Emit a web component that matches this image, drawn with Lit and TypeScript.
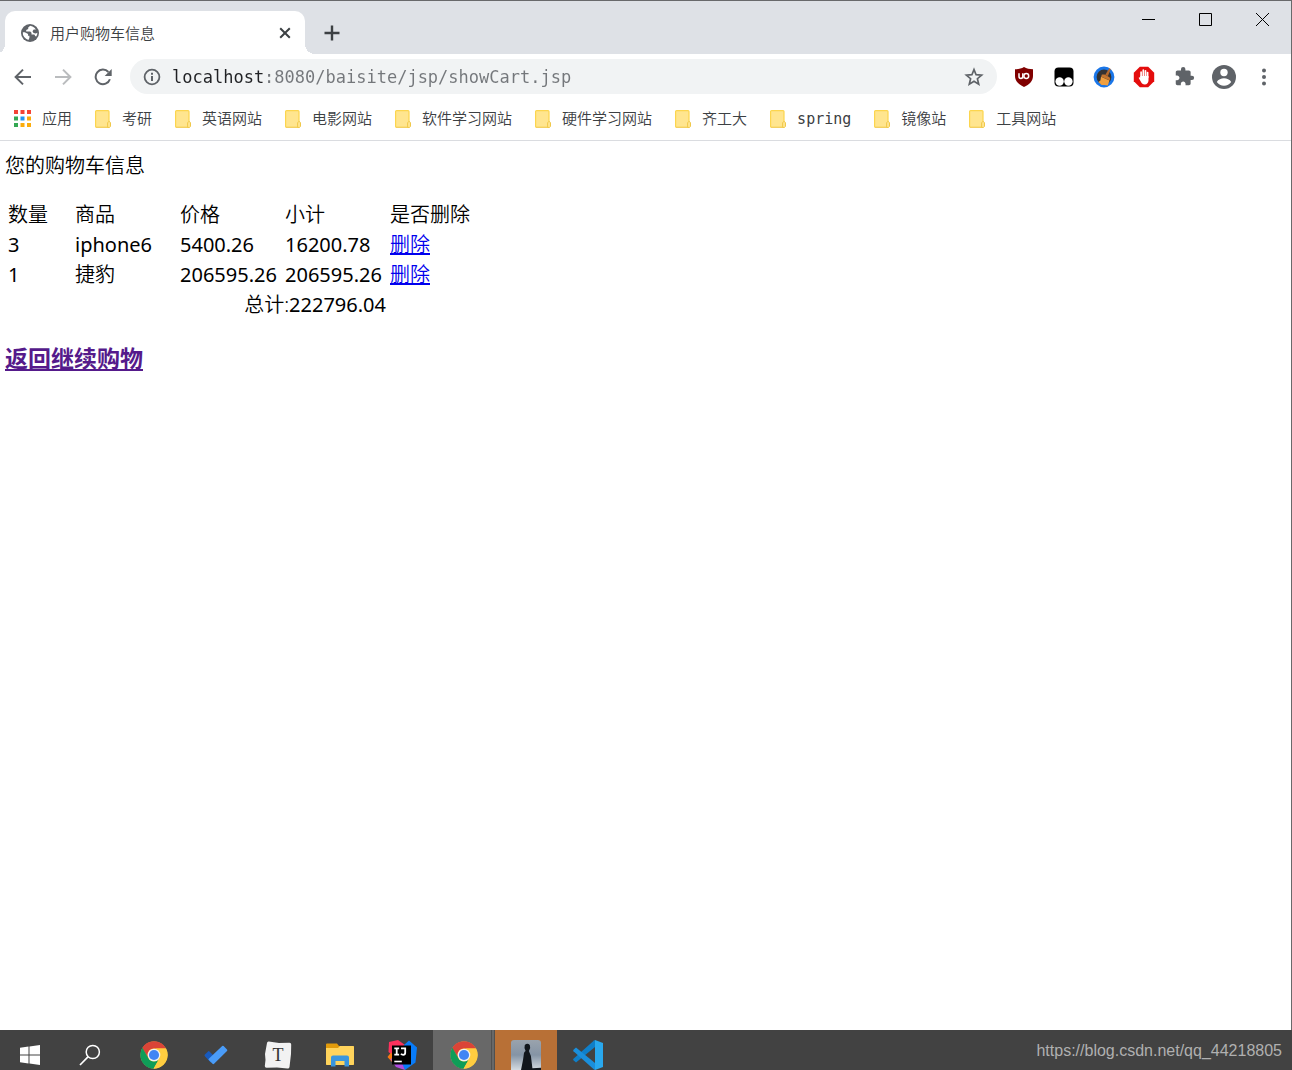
import { LitElement, html, css, svg } from "lit";
import { customElement } from "lit/decorators.js";

interface CartItem {
  count: number;
  name: string;
  lang: string;
  price: string;
  subtotal: string;
}

const items: CartItem[] = [
  { count: 3, name: "iphone6", lang: "en", price: "5400.26", subtotal: "16200.78" },
  { count: 1, name: "捷豹", lang: "zh", price: "206595.26", subtotal: "206595.26" },
];

const bookmarks = [
  "考研", "英语网站", "电影网站", "软件学习网站", "硬件学习网站",
  "齐工大", "spring", "镜像站", "工具网站",
];

const appColors = [
  "#f44336", "#f44336", "#f44336",
  "#34a853", "#2196f3", "#fbac0c",
  "#34a853", "#fbac0c", "#fbac0c",
];

const globe = html`<svg width="20" height="20" viewBox="0 0 20 20" aria-hidden="true">
  <circle cx="10" cy="10" r="9" fill="#5f6368" />
  <path d="M10.2 2.8 8.2 4.6v1.5l-2 .9v1.6h4l1.3 1.2v1.7h2.2c.9 0 1.3.6 1.3 1.4l1.2.7c.8-1.1 1.2-2.4 1.2-3.8l-1.6.6-2.3-.4-1-1.8 1.2-1.7h2.2a7.2 7.2 0 0 0-3.4-2.9z" fill="#fff" />
  <path d="M2.8 9.2h1.9l3 1.6c.6.5.5 1.4.1 1.9h1.6v2.2l-1 2A7.2 7.2 0 0 1 2.8 9.2z" fill="#fff" />
</svg>`;

const closeIcon = html`<svg width="12" height="12" viewBox="0 0 12 12" aria-hidden="true">
  <path d="M1.2 1.2l9.6 9.6M10.8 1.2L1.2 10.8" stroke="#3c4043" stroke-width="2" fill="none" />
</svg>`;

const plusIcon = html`<svg width="16" height="16" viewBox="0 0 16 16" aria-hidden="true">
  <path d="M8 .5v15M.5 8h15" stroke="#3c4043" stroke-width="2.4" fill="none" />
</svg>`;

const arrow = (color: string, flip: boolean) => html`<svg width="18" height="18" viewBox="0 0 18 18" aria-hidden="true">
  <path d=${flip ? "M1 9h15M9 1.6 16.4 9 9 16.4" : "M17 9H2M9 1.6 1.6 9 9 16.4"} stroke=${color} stroke-width="2" fill="none" />
</svg>`;

const reloadIcon = html`<svg width="18" height="18" viewBox="0 0 18 18" aria-hidden="true">
  <path d="M15.9 11.2A7.3 7.3 0 1 1 14.4 4" stroke="#5f6368" stroke-width="2" fill="none" />
  <path d="M17.7.9v7h-7z" fill="#5f6368" />
</svg>`;

const infoIcon = html`<svg width="18" height="18" viewBox="0 0 18 18" aria-hidden="true">
  <circle cx="9" cy="9" r="7.4" stroke="#5f6368" stroke-width="1.8" fill="none" />
  <path d="M9 8v5M9 4.8v2" stroke="#5f6368" stroke-width="2" />
</svg>`;

const starIcon = html`<svg width="20" height="20" viewBox="0 0 20 20" aria-hidden="true">
  <path d="M10 2.6l2.1 5.1 5.5.4-4.2 3.6 1.3 5.4-4.7-2.9-4.7 2.9 1.3-5.4L2.4 8.100l5.500-.4z" stroke="#5f6368" stroke-width="1.700" fill="none" />
</svg>`;

const ublock = html`<svg width="20" height="22" viewBox="0 0 20 22" aria-hidden="true">
  <path d="M10 1c2.500 1.600 5.500 2.200 9 2.200V10c0 5-3.500 8.500-9 11-5.500-2.500-9-6-9-11V3.200C4.500 3.200 7.500 2.600 10 1z" fill="#800000" />
  <path d="M5 7.300v3.200a1.900 1.900 0 0 0 3.800 0V7.300v5.200" stroke="#fff" stroke-width="1.500" fill="none" />
  <circle cx="12.300" cy="10" r="2.400" stroke="#fff" stroke-width="1.500" fill="none" />
</svg>`;

const tampermonkey = html`<svg width="20" height="20" viewBox="0 0 20 20" aria-hidden="true">
  <rect x=".5" y=".5" width="19" height="19" rx="4" fill="#000" />
  <circle cx="5.600" cy="14.500" r="4.200" fill="#fff" />
  <circle cx="14.400" cy="14.500" r="4.200" fill="#fff" />
</svg>`;

const broom = html`<svg width="22" height="22" viewBox="0 0 22 22" aria-hidden="true">
  <circle cx="11" cy="11" r="8.900" fill="#333" stroke="#1a76e8" stroke-width="3" />
  <path d="M16.200 2.200l1.600.9-2.900 6.900-2.700-1.100z" fill="#b5692c" />
  <path d="M8.800 8.600l2.700 0 5 2.700.8 1.800-.8 1.200-8.300-3.500z" fill="#c4762e" />
  <path d="M8 10.800l8.500 3.600-1.700 5.200-3.600-.6-2.600-.1-3.200-2.900 2-1.600z" fill="#f0a040" />
</svg>`;

const adblock = html`<svg width="22" height="22" viewBox="0 0 22 22" aria-hidden="true">
  <path d="M6.800.800h8.400l6 6v8.400l-6 6H6.800l-6-6V6.800z" fill="#e40d0d" />
  <path d="M8.100 11.500V6.200M10.300 10.500V4.200M12.500 10.500V4.800M14.600 11.500V6.600" stroke="#fff" stroke-width="1.700" stroke-linecap="round" />
  <path d="M7.300 10h8.200v4.600c0 2.400-1.500 3.900-3.700 3.900-2 0-3-.8-3.900-2.700l-2.200-3.800c0-1 .9-1.200 1.600-.2z" fill="#fff" />
</svg>`;

const puzzle = html`<svg width="21" height="21" viewBox="0 0 24 24" aria-hidden="true">
  <path d="M20.500 11H19V7c0-1.100-.9-2-2-2h-4V3.500a2.500 2.500 0 0 0-5 0V5H4c-1.100 0-1.990.9-1.990 2v3.800H3.500c1.490 0 2.700 1.210 2.700 2.700s-1.210 2.700-2.700 2.700H2V20c0 1.100.9 2 2 2h3.800v-1.500c0-1.490 1.210-2.700 2.700-2.700s2.700 1.210 2.700 2.700V22H17c1.100 0 2-.9 2-2v-4h1.500a2.500 2.500 0 0 0 0-5z" fill="#5f6368" />
</svg>`;

const avatar = html`<svg width="24" height="24" viewBox="0 0 24 24" aria-hidden="true">
  <circle cx="12" cy="12" r="12" fill="#5f6368" />
  <circle cx="12" cy="7.500" r="3.700" fill="#fff" />
  <path d="M4.800 17c1.200-2.500 4.600-3.700 7.200-3.700s6 1.200 7.200 3.700a8.700 8.700 0 0 1-14.400 0z" fill="#fff" />
</svg>`;

const dots = html`<svg width="6" height="18" viewBox="0 0 6 18" aria-hidden="true">
  <circle cx="3" cy="2.500" r="2" fill="#5f6368" /><circle cx="3" cy="9" r="2" fill="#5f6368" /><circle cx="3" cy="15.500" r="2" fill="#5f6368" />
</svg>`;

const folderMark = html`<svg width="16" height="18" viewBox="0 0 16 18" aria-hidden="true">
  <rect x=".6" y=".6" width="13.400" height="16.800" rx="1" fill="#ffe58f" stroke="#fcd54e" stroke-width="1.200" />
  <path d="M1 17.400h11" stroke="#f3cf63" stroke-width="1.200" />
  <path d="M12.600 17.400v-4.600l1-1.200h1l.9 1.200v3.600l-1 1z" fill="#ffe58f" stroke="#f0c84a" />
</svg>`;

const appsIcon = html`<svg width="17" height="17" viewBox="0 0 17 17" aria-hidden="true">
  ${appColors.map((c, i) => svg`<rect x=${(i % 3) * 6.5} y=${Math.floor(i / 3) * 6.5} width="4" height="4" fill=${c} />`)}
</svg>`;

const windowsLogo = html`<svg width="20" height="20" viewBox="0 0 20 20" aria-hidden="true">
  <path d="M0 2.800l8.500-1.200v8H0zM9.500 1.400L20 0v9.600H9.500zM0 10.500h8.500v8L0 17.300zM9.500 10.500H20V20L9.500 18.600z" fill="#fff" />
</svg>`;

const searchIcon = html`<svg width="22" height="22" viewBox="0 0 22 22" aria-hidden="true">
  <circle cx="13.800" cy="8" r="6.600" stroke="#fff" stroke-width="1.500" fill="none" />
  <path d="M9.200 12.700L1 21" stroke="#fff" stroke-width="1.700" />
</svg>`;

const chromeLogo = html`<svg width="28" height="28" viewBox="0 0 48 48" aria-hidden="true">
  <circle cx="24" cy="24" r="23" fill="#ffcd40" />
  <path d="M24 13h20.800A23.500 23.500 0 0 0 3.650 12.250L14.470 29.500A11 11 0 0 1 24 13z" fill="#db4437" />
  <path d="M14.470 29.500L4.100 11.550A23.500 23.500 0 0 0 23.200 47.490L33.530 29.500A11 11 0 0 1 14.470 29.500z" fill="#0f9d58" />
  <path d="M33.530 29.500L23.200 47.490A23.500 23.500 0 0 0 44.800 13H24a11 11 0 0 1 9.530 16.500z" fill="#ffcd40" />
  <circle cx="24" cy="24" r="10.800" fill="#f1f1f1" />
  <circle cx="24" cy="24" r="8.700" fill="#4285f4" />
</svg>`;

const todoIcon = html`<svg width="24" height="20" viewBox="0 0 24 20" aria-hidden="true">
  <path d="M5.200 6.200l5.500 5.500-4 5.700L.9 11.300q-.8-.9 0-1.700L4.300 6.200q.5-.5.9 0z" fill="#185abd" />
  <path d="M18.200 1.100q.7-.7 1.400 0l3.400 3.400q.7.700 0 1.400L10.100 18.800q-.8.800-1.600 0l-3.700-3.700q-.7-.7 0-1.400z" fill="#4a9cf8" />
</svg>`;

const typoraIcon = html`<svg width="30" height="30" viewBox="0 0 30 30" aria-hidden="true">
  <path d="M4 3q.2-1.700 1.800-1.500L16 3l10.500-.2q1.800.2 1.700 1.800L28 14l-1.500 13q-.3 1.800-2 1.600L14 27.500l-10.500.3q-1.800-.1-1.700-1.700L2.500 20 2 14z" fill="#f2f2f2" />
  <text x="15" y="21" text-anchor="middle" font-family="Liberation Serif, serif" font-size="18" fill="#333">T</text>
</svg>`;

const explorerIcon = html`<svg width="28" height="24" viewBox="0 0 28 24" aria-hidden="true">
  <path d="M0 1.500Q0 .500 1 .500h10l2 2.500h14q1 0 1 1V21q0 1-1 1H1q-1 0-1-1z" fill="#e29b0b" />
  <path d="M0 5h12l2-2h13q1 0 1 1v17q0 1-1 1H1q-1 0-1-1z" fill="#ffd45c" />
  <path d="M5 23.500V14.500q0-2 2-2h14q2 0 2 2v9h-4.500V18h-9v5.500z" fill="#3a96dd" />
</svg>`;

const ideaIcon = html`<svg width="30" height="30" viewBox="0 0 30 30" aria-hidden="true">
  <path d="M2 2L11 0l7 5-3 18L1.500 12z" fill="#fe315d" />
  <path d="M.5 17L4 12.500 11 24l-6-2z" fill="#f97a12" />
  <path d="M17 5l5-4.500L30 7.500l-1.500 15L18 30l-8-14z" fill="#087cfa" />
  <path d="M3.500 19l5.500 8 9 3-6-14z" fill="#b04be0" />
  <rect x="5" y="5.500" width="19" height="19" fill="#000" />
  <path d="M7.300 8.300h4.800M9.700 8.300v6.400M7.300 14.700h4.800M14 8.300h4.200v4.500q0 2-2 2-1.400 0-2.200-1" stroke="#fff" stroke-width="1.800" fill="none" />
  <path d="M7.300 21.500h7.500" stroke="#fff" stroke-width="1.600" />
</svg>`;

const portraitIcon = html`<svg width="30" height="30" viewBox="0 0 30 30" aria-hidden="true">
  <defs>
    <linearGradient id="sky" x1="0" y1="0" x2="0" y2="1">
      <stop offset="0" stop-color="#9aa3ad" /><stop offset=".5" stop-color="#8594a5" /><stop offset="1" stop-color="#d4dbe1" />
    </linearGradient>
  </defs>
  <path d="M0 30V3q0-3 3-3h24q3 0 3 3v27z" fill="url(#sky)" />
  <path d="M13.800 5q2.600-2.600 5 0 1.200 3-.9 6l2 5 1.500 12.200 8.600-.4V30H10l2-10 1-7q.6-1.500 1.600-2-1.800-3-.8-6z" fill="#11161c" />
</svg>`;

const codeIcon = html`<svg width="30" height="30" viewBox="0 0 30 30" aria-hidden="true">
  <path d="M22 0l8 3v24l-8 3z" fill="#29a8ee" />
  <path d="M22 7L3 22.500l-2.500-2.200q-.6-.8 0-1.500L21 .500 22 0z" fill="#0f7fc9" />
  <path d="M22 23L3 7.500.500 9.700q-.6.800 0 1.500L21 29.500l1 .5z" fill="#1a8fdc" />
</svg>`;

@customElement("app-root")
export class AppRoot extends LitElement {
  static styles = css`
    :host {
      display: flex;
      flex-direction: column;
      min-height: 100vh;
      font-family: "Noto Sans", "Noto Sans CJK SC", sans-serif;
      color: #000;
      background: #fff;
    }
    * { box-sizing: border-box; }
    svg { display: block; flex: none; }
    button {
      display: flex;
      align-items: center;
      justify-content: center;
      padding: 0;
      border: 0;
      background: none;
      font: inherit;
      cursor: pointer;
    }
    .window {
      flex: 1;
      display: flex;
      flex-direction: column;
      border-top: 1px solid #68696b;
      border-right: 1px solid #68696b;
    }
    .strip {
      display: flex;
      align-items: flex-end;
      height: 53px;
      padding-left: 5px;
      background: #dee1e6;
    }
    .tab {
      position: relative;
      display: flex;
      align-items: center;
      width: 300px;
      height: 43px;
      padding: 0 14px 0 15px;
      gap: 10px;
      border-radius: 10px 10px 0 0;
      background: #fff;
    }
    .tab::before, .tab::after {
      content: "";
      position: absolute;
      bottom: 0;
      width: 10px;
      height: 10px;
    }
    .tab::before { left: -10px; background: radial-gradient(circle at 0 0, #dee1e6 10px, #fff 10px); }
    .tab::after { right: -10px; background: radial-gradient(circle at 100% 0, #dee1e6 10px, #fff 10px); }
    .title {
      flex: 1;
      font-size: 15px;
      font-family: "Noto Sans CJK SC", sans-serif;
      font-weight: 350;
      line-height: 20px;
      color: #3c4043;
      white-space: nowrap;
    }
    .new { width: 34px; height: 43px; margin-left: 10px; }
    .controls { display: flex; align-self: flex-start; margin-left: auto; }
    .control { width: 57px; height: 37px; }
    .toolbar {
      display: flex;
      align-items: center;
      height: 45px;
      padding: 0 7px 0 3px;
    }
    .tool { width: 40px; height: 36px; flex: none; }
    .omnibox {
      flex: 1;
      display: flex;
      align-items: center;
      height: 35px;
      margin: 0 7px;
      padding: 0 13px;
      gap: 11px;
      border-radius: 18px;
      background: #f1f3f4;
    }
    .info, .star { flex: none; }
    .address {
      flex: 1;
      min-width: 0;
      padding: 0;
      border: 0;
      outline: 0;
      font-family: "DejaVu Sans Mono", monospace;
      font-size: 17px;
      line-height: 24px;
      color: #5f6368;
      background: linear-gradient(90deg, #202124 9ch, #74777b 9ch);
      -webkit-background-clip: text;
      background-clip: text;
      -webkit-text-fill-color: transparent;
    }
    .bookmarks {
      display: flex;
      align-items: center;
      gap: 23px;
      height: 42px;
      padding: 0 14px 2px;
      border-bottom: 1px solid #dadce0;
      overflow: hidden;
    }
    .mark {
      display: flex;
      align-items: center;
      gap: 11px;
      font-family: "DejaVu Sans Mono", "Noto Sans CJK SC", monospace;
      font-size: 15px;
      font-weight: 350;
      line-height: 20px;
      color: #3c4043;
      text-decoration: none;
      white-space: nowrap;
    }
    .page { flex: 1; padding: 12px 5px; font-size: 20px; line-height: 26px; }
    .lead { margin: 0 0 20px; font-weight: 350; }
    .cart { border-spacing: 2px; table-layout: fixed; width: 480px; }
    .cart th, .cart td { padding: 1px; text-align: left; font-weight: 400; white-space: nowrap; }
    .cart th, .cart [lang="zh"] { font-weight: 350; }
    .cart .total { text-align: right; }
    .narrow { width: 65px; }
    .wide { width: 103px; }
    .remove { color: #0000ee; }
    .back { margin: 22px 0 0; font-size: 23px; line-height: 30px; font-weight: 700; }
    .back a { color: #551a8b; }
    .taskbar {
      display: flex;
      align-items: stretch;
      height: 40px;
      padding-right: 10px;
      background: #424242;
    }
    .task { width: 62px; height: 40px; padding-top: 10px; flex: none; }
    .system { width: 60px; }
    .search { margin-right: 3px; }
    .active { background: #686868; border-right: 4px double #505050; padding-left: 4px; }
    .alert { background: #b87036; }
    .watermark {
      margin-left: auto;
      padding-top: 11px;
      font-family: "Liberation Sans", sans-serif;
      font-size: 16px;
      line-height: 20px;
      color: #b0b0b0;
    }
  `;

  private cartTable() {
    return html`<table class="cart">
      <colgroup>
        <col class="narrow" /><col class="wide" /><col class="wide" /><col class="wide" /><col />
      </colgroup>
      <thead>
        <tr><th>数量</th><th>商品</th><th>价格</th><th>小计</th><th>是否删除</th></tr>
      </thead>
      <tbody>
        ${items.map((i) => html`<tr>
          <td>${i.count}</td><td lang=${i.lang}>${i.name}</td><td>${i.price}</td><td>${i.subtotal}</td>
          <td lang="zh"><a class="remove" href="#delete">删除</a></td>
        </tr>`)}
        <tr><td class="total" colspan="4"><span lang="zh">总计:</span>222796.04</td><td></td></tr>
      </tbody>
    </table>`;
  }

  render() {
    return html`
      <div class="window">
        <header>
          <div class="strip">
            <div class="tab">
              ${globe}<span class="title">用户购物车信息</span>
              <button aria-label="关闭标签页">${closeIcon}</button>
            </div>
            <button class="new" aria-label="新标签页">${plusIcon}</button>
            <div class="controls">
              <button class="control" aria-label="最小化"><svg width="13" height="13" viewBox="0 0 13 13"><path d="M0 6.500h13" stroke="#000" /></svg></button>
              <button class="control" aria-label="最大化"><svg width="13" height="13" viewBox="0 0 13 13"><path d="M.5.5h12v12H.5z" stroke="#000" fill="none" /></svg></button>
              <button class="control" aria-label="关闭"><svg width="13" height="13" viewBox="0 0 13 13"><path d="M0 0l13 13M13 0L0 13" stroke="#000" /></svg></button>
            </div>
          </div>
          <div class="toolbar">
            <button class="tool" aria-label="后退">${arrow("#5f6368", false)}</button>
            <button class="tool" aria-label="前进">${arrow("#babcbe", true)}</button>
            <button class="tool" aria-label="重新加载">${reloadIcon}</button>
            <div class="omnibox">
              <button class="info" aria-label="网站信息">${infoIcon}</button>
              <input class="address" type="text" aria-label="地址" spellcheck="false" .value=${"localhost:8080/baisite/jsp/showCart.jsp"} />
              <button class="star" aria-label="添加书签">${starIcon}</button>
            </div>
            <button class="tool" aria-label="uBlock">${ublock}</button>
            <button class="tool" aria-label="Tampermonkey">${tampermonkey}</button>
            <button class="tool" aria-label="清理">${broom}</button>
            <button class="tool" aria-label="AdBlock">${adblock}</button>
            <button class="tool" aria-label="扩展程序">${puzzle}</button>
            <button class="tool" aria-label="用户">${avatar}</button>
            <button class="tool" aria-label="菜单">${dots}</button>
          </div>
          <nav class="bookmarks">
            <a class="mark" href="#apps">${appsIcon}<span>应用</span></a>
            ${bookmarks.map((b) => html`<a class="mark" href="#bookmark">${folderMark}<span>${b}</span></a>`)}
          </nav>
        </header>
        <main class="page">
          <p class="lead">您的购物车信息</p>
          ${this.cartTable()}
          <h3 class="back"><a href="#shop">返回继续购物</a></h3>
        </main>
      </div>
      <footer class="taskbar">
        <button class="task system" aria-label="开始">${windowsLogo}</button>
        <button class="task system search" aria-label="搜索">${searchIcon}</button>
        <button class="task" aria-label="Chrome">${chromeLogo}</button>
        <button class="task" aria-label="To Do">${todoIcon}</button>
        <button class="task" aria-label="Typora">${typoraIcon}</button>
        <button class="task" aria-label="文件资源管理器">${explorerIcon}</button>
        <button class="task" aria-label="IntelliJ IDEA">${ideaIcon}</button>
        <button class="task active" aria-label="Chrome 窗口">${chromeLogo}</button>
        <button class="task alert" aria-label="聊天">${portraitIcon}</button>
        <button class="task" aria-label="VS Code">${codeIcon}</button>
        <span class="watermark">https://blog.csdn.net/qq_44218805</span>
      </footer>
    `;
  }
}
